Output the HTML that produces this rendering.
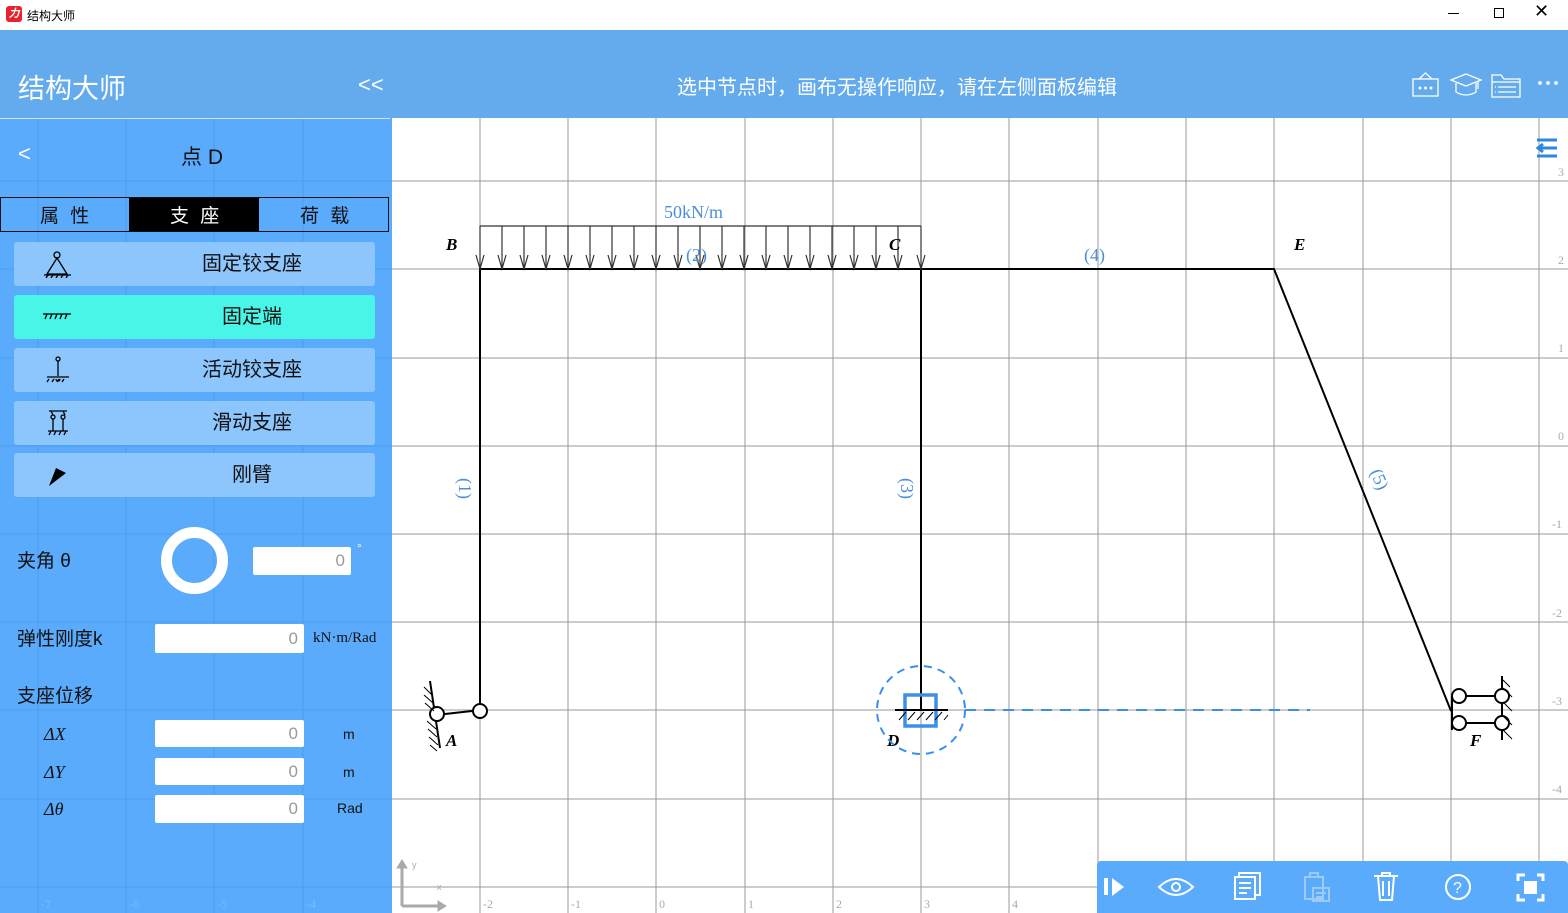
<!DOCTYPE html>
<html><head><meta charset="utf-8"><style>
*{margin:0;padding:0;box-sizing:border-box}
body{width:1568px;height:913px;overflow:hidden;position:relative;background:#fff;font-family:"Liberation Sans","Noto Sans CJK SC",sans-serif}
.abs{position:absolute}
.top{left:0;top:0;width:1568px;height:30px;background:#fff;font-size:12px;color:#000}
.hdr{left:0;top:30px;width:1568px;height:88px;background:#64abee;color:#fff}
.side{left:0;top:118px;width:392px;height:795px;background:#5aabfb;overflow:hidden}
.btn{position:absolute;left:14px;width:361px;height:44px;background:#8dc5fd;border-radius:3px;font-size:20px;color:#111;line-height:44px}
.btn span{position:absolute;left:0;width:476px;text-align:center}
.inp{position:absolute;background:#fff;border-radius:2px;color:#999;text-align:right;padding-right:6px;font-size:17px}
.lbl{position:absolute;font-size:19px;color:#111}
</style></head><body>
<div class="abs top">
 <div class="abs" style="left:6px;top:6px;width:16px;height:16px;background:#e8232e;border-radius:3px;color:#fff;font-size:11px;font-weight:bold;text-align:center;line-height:16px;font-style:italic">力</div>
 <div class="abs" style="left:27px;top:7px">结构大师</div>
 <div class="abs" style="left:1448px;top:13px;width:11px;height:1px;background:#000"></div>
 <div class="abs" style="left:1494px;top:8px;width:10px;height:10px;border:1px solid #000"></div>
 <div class="abs" style="left:1534px;top:1px;font-size:18px">✕</div>
</div>
<div class="abs hdr">
 <div class="abs" style="left:18px;top:37px;font-size:27px">结构大师</div>
 <div class="abs" style="left:358px;top:42px;font-size:22px">&lt;&lt;</div>
 <div class="abs" style="left:677px;top:41px;font-size:20px">选中节点时，画布无操作响应，请在左侧面板编辑</div>
 <svg class="abs" style="left:1410px;top:40px" width="158" height="30" fill="none" stroke="#fff" stroke-width="1.3">
  <rect x="3" y="9" width="25" height="17"/><path d="M9 9 L15.5 3 L22 9"/><circle cx="10" cy="18" r=".8" fill="#fff"/><circle cx="15.5" cy="18" r=".8" fill="#fff"/><circle cx="21" cy="18" r=".8" fill="#fff"/>
  <path d="M41 10 L56 4 L71 10 L56 16 Z"/><path d="M46 13 V22 Q56 28 66 22 V13"/><path d="M68 11 V19"/>
  <path d="M82 5 H91 L94 9 H110 V27 H82 Z"/><path d="M82 12 H110"/><path d="M88 17 H106 M88 22 H106 M85 17 H86 M85 22 H86"/>
  <circle cx="130" cy="13" r="1.2" fill="#fff"/><circle cx="138" cy="13" r="1.2" fill="#fff"/><circle cx="146" cy="13" r="1.2" fill="#fff"/>
 </svg>
</div>

<svg class="abs" style="left:0;top:118px" width="1568" height="795">
 <g stroke="#999" stroke-width="1">
  <path d="M480 0V795M568 0V795M656 0V795M745 0V795M833 0V795M921 0V795M1009 0V795M1098 0V795M1186 0V795M1274 0V795M1363 0V795M1451 0V795M1539 0V795"/>
  <path d="M392 63H1568M392 151H1568M392 240H1568M392 328H1568M392 416H1568M392 504H1568M392 592H1568M392 681H1568M392 769H1568"/>
 </g>
 <g fill="#aaa" font-family="Liberation Serif" font-size="12">
  <text x="483" y="790">-2</text><text x="571" y="790">-1</text><text x="659" y="790">0</text><text x="748" y="790">1</text><text x="836" y="790">2</text><text x="924" y="790">3</text><text x="1012" y="790">4</text><text x="1558" y="58">3</text><text x="1558" y="146">2</text><text x="1558" y="234">1</text><text x="1558" y="322">0</text><text x="1552" y="410">-1</text><text x="1552" y="499">-2</text><text x="1552" y="587">-3</text><text x="1552" y="675">-4</text><text x="1552" y="763">-5</text>
 </g>
 <path d="M1537 22H1557M1537 30H1557M1537 38H1557M1546 30H1538M1543 26L1538 30L1543 34" stroke="#2d86e0" stroke-width="3" fill="none"/>
 <g stroke="#000" stroke-width="2" fill="none">
  <path d="M480 593V151H1274L1451 593"/><path d="M921 151V593"/>
 </g>
 <g stroke="#333" stroke-width="1.2" fill="none">
  <path d="M480 108H921"/>
  <path d="M480 108V151M502 108V151M524 108V151M546 108V151M568 108V151M590 108V151M612 108V151M634 108V151M656 108V151M678 108V151M700 108V151M722 108V151M744 108V151M766 108V151M788 108V151M810 108V151M832 108V151M854 108V151M876 108V151M898 108V151M921 108V151"/>
  <path d="M476 137L480 151L484 137M498 137L502 151L506 137M520 137L524 151L528 137M542 137L546 151L550 137M564 137L568 151L572 137M586 137L590 151L594 137M608 137L612 151L616 137M630 137L634 151L638 137M652 137L656 151L660 137M674 137L678 151L682 137M696 137L700 151L704 137M718 137L722 151L726 137M740 137L744 151L748 137M762 137L766 151L770 137M784 137L788 151L792 137M806 137L810 151L814 137M828 137L832 151L836 137M850 137L854 151L858 137M872 137L876 151L880 137M894 137L898 151L902 137M917 137L921 151L925 137"/>
 </g>
 <g fill="#4a90d9" font-family="Liberation Serif" font-size="18">
  <text x="664" y="100">50kN/m</text>
  <text x="686" y="143">(2)</text><text x="1084" y="143">(4)</text>
  <text transform="translate(459,360) rotate(90)">(1)</text>
  <text transform="translate(901,360) rotate(90)">(3)</text>
  <text transform="translate(1370,354) rotate(67)">(5)</text>
 </g>
 <g font-family="Liberation Serif" font-style="italic" font-weight="bold" font-size="17" fill="#000">
  <text x="446" y="132">B</text><text x="889" y="132">C</text><text x="1294" y="132">E</text><text x="446" y="628">A</text><text x="887" y="628">D</text><text x="1470" y="628">F</text>
 </g>
 <g stroke="#000" stroke-width="2" fill="#fff">
  <path d="M430 563L440 630" fill="none"/><path d="M445 596L472 593" fill="none"/>
  <circle cx="437" cy="596" r="7"/><circle cx="480" cy="593" r="7"/>
 </g>
 <path d="M424 569L432 577M424 577L433 585M425 585L434 593M427 603L436 611M428 611L437 619M429 619L438 627M430 627L437 633" stroke="#000" stroke-width="1"/>
 <rect x="905" y="577" width="31" height="31" fill="none" stroke="#3a8fe8" stroke-width="3.5"/>
 <path d="M895 592H948" stroke="#000" stroke-width="2"/>
 <path d="M899 602L906 594M908 602L915 594M917 602L924 594M926 602L933 594M935 602L942 594M944 602L948 597" stroke="#000" stroke-width="1"/>
 <circle cx="921" cy="592" r="44" fill="none" stroke="#3a8fe8" stroke-width="2" stroke-dasharray="8 6"/>
 <path d="M965 592H1310" stroke="#3a8fe8" stroke-width="2" stroke-dasharray="11 8"/>
 <g stroke="#000" stroke-width="2" fill="#fff">
  <path d="M1452 578V612M1502 558V622M1467 578H1495M1467 605H1495" fill="none"/>
  <circle cx="1459" cy="578" r="7"/><circle cx="1459" cy="605" r="7"/><circle cx="1502" cy="578" r="7"/><circle cx="1502" cy="605" r="7"/>
 </g>
 <path d="M1503 562L1510 569M1503 570L1512 579M1503 584L1512 593M1503 598L1512 607M1503 612L1512 621" stroke="#000" stroke-width="1"/>
 <g stroke="#aaa" stroke-width="3" fill="#aaa"><path d="M402 788V748M402 788H440"/><path d="M397 750L402 742L407 750Z" stroke-width="1"/><path d="M438 783L446 788L438 793Z" stroke-width="1"/></g>
 <text x="412" y="750" font-size="9" fill="#aaa">y</text><text x="437" y="772" font-size="9" fill="#aaa">x</text>
</svg>

<div class="abs" style="left:1097px;top:861px;width:471px;height:52px;background:#5aabfb;border-radius:4px 4px 0 0"></div>
<svg class="abs" style="left:1097px;top:861px" width="471" height="52" fill="none" stroke="#fff" stroke-width="2">
 <path d="M9 17V34" stroke-width="4"/><path d="M15 17L27 26L15 35Z" fill="#fff" stroke="none"/>
 <path d="M62 26Q79 10 96 26Q79 42 62 26Z"/><circle cx="79" cy="26" r="4"/>
 <rect x="138" y="16" width="20" height="22"/><path d="M142 16V12H163V34H158M142 22H154M142 27H154M142 32H150"/>
 <g stroke="#9ccbf7"><rect x="208" y="16" width="18" height="22"/><path d="M213 16V12H221V16M216 27H232V40H216ZM219 32H229M219 36H226"/></g>
 <path d="M277 15H301M281 15L283 39H295L297 15M286 20V35M292 20V35M285 15V12H293V15"/>
 <circle cx="361" cy="26" r="12"/><text x="356" y="32" fill="#fff" stroke="none" font-size="16" font-family="Liberation Sans">?</text>
 <path d="M421 20V14H428M440 14H446V20M446 33V39H440M428 39H421V33" stroke-width="3"/><rect x="427" y="20" width="13" height="13" fill="#fff" stroke="none"/>
</svg>

<div class="abs side">
 <svg class="abs" style="left:0;top:0" width="392" height="795">
  <g stroke="#4d9df0" stroke-width="1"><path d="M38 0V795M126 0V795M214 0V795M303 0V795"/><path d="M0 63H392M0 151H392M0 240H392M0 328H392M0 416H392M0 504H392M0 592H392M0 681H392M0 769H392"/></g>
  <g fill="#7cbcf8" font-family="Liberation Serif" font-size="12"><text x="41" y="790">-7</text><text x="129" y="790">-6</text><text x="217" y="790">-5</text><text x="306" y="790">-4</text></g>
 </svg>
 <div class="abs" style="left:0;top:0;width:390px;height:1px;background:#cfe4fb"></div>
 <div class="abs" style="left:18px;top:23px;font-size:22px;color:#fff">&lt;</div>
 <div class="abs" style="left:181px;top:23px;font-size:21px;color:#111">点 D</div>
 <div class="abs" style="left:0;top:79px;width:389px;height:35px;border:1.5px solid #111"></div>
 <div class="abs" style="left:129px;top:80px;width:130px;height:33px;background:#000"></div>
 <div class="abs" style="left:40px;top:83px;font-size:19px;color:#111;letter-spacing:3px">属 性</div>
 <div class="abs" style="left:170px;top:83px;font-size:19px;color:#fff;letter-spacing:3px">支 座</div>
 <div class="abs" style="left:300px;top:83px;font-size:19px;color:#111;letter-spacing:3px">荷 载</div>

 <div class="btn" style="top:124px"><span>固定铰支座</span>
  <svg class="abs" style="left:28px;top:8px" width="30" height="28" fill="none" stroke="#000" stroke-width="1.3"><circle cx="15" cy="5" r="3"/><path d="M15 8L5 24H25Z M2 25H29 M4 28L6 25M9 28L11 25M14 28L16 25M19 28L21 25M24 28L26 25"/></svg></div>
 <div class="btn" style="top:177px;background:#48f5e6"><span>固定端</span>
  <svg class="abs" style="left:28px;top:16px" width="30" height="10" fill="none" stroke="#000" stroke-width="1.3"><path d="M1 3H29 M3 8L5 3M8 8L10 3M13 8L15 3M18 8L20 3M23 8L25 3"/></svg></div>
 <div class="btn" style="top:230px"><span>活动铰支座</span>
  <svg class="abs" style="left:30px;top:8px" width="28" height="28" fill="none" stroke="#000" stroke-width="1.3"><circle cx="14" cy="3" r="2"/><path d="M14 5V20M3 21H25M12 23a2 2 0 1 0 4 0 M3 26L5 23M8 26L10 23M13 26L15 23M18 26L20 23"/></svg></div>
 <div class="btn" style="top:283px"><span>滑动支座</span>
  <svg class="abs" style="left:32px;top:8px" width="24" height="28" fill="none" stroke="#000" stroke-width="1.3"><path d="M3 2H21M5 2L7 6M17 2L19 6"/><circle cx="7" cy="8" r="2"/><circle cx="17" cy="8" r="2"/><path d="M7 10V22M17 10V22M2 22H22M3 26L5 22M8 26L10 22M13 26L15 22M18 26L20 22"/></svg></div>
 <div class="btn" style="top:335px"><span>刚臂</span>
  <svg class="abs" style="left:32px;top:9px" width="24" height="26"><path d="M3 24L10 6L20 11Z" fill="#000"/></svg></div>

 <div class="lbl" style="left:17px;top:428px">夹角 θ</div>
 <div class="abs" style="left:161px;top:409px;width:67px;height:67px;border:11px solid #fff;border-radius:50%"></div>
 <div class="inp" style="left:253px;top:429px;width:98px;height:28px;line-height:28px">0</div>
 <div class="abs" style="left:357px;top:423px;font-size:12px;color:#fff">°</div>

 <div class="lbl" style="left:17px;top:506px">弹性刚度k</div>
 <div class="inp" style="left:155px;top:506px;width:149px;height:29px;line-height:29px">0</div>
 <div class="abs" style="left:313px;top:512px;font-size:15px;color:#111;font-family:'Liberation Serif',serif">kN·m/Rad</div>

 <div class="lbl" style="left:17px;top:563px">支座位移</div>
 <div class="abs" style="left:44px;top:606px;font-size:18px;font-style:italic;font-family:'Liberation Serif',serif;color:#111">ΔX</div>
 <div class="abs" style="left:44px;top:644px;font-size:18px;font-style:italic;font-family:'Liberation Serif',serif;color:#111">ΔY</div>
 <div class="abs" style="left:44px;top:681px;font-size:18px;font-style:italic;font-family:'Liberation Serif',serif;color:#111">Δθ</div>
 <div class="inp" style="left:155px;top:602px;width:149px;height:27px;line-height:27px">0</div>
 <div class="inp" style="left:155px;top:640px;width:149px;height:27px;line-height:27px">0</div>
 <div class="inp" style="left:155px;top:677px;width:149px;height:28px;line-height:28px">0</div>
 <div class="abs" style="left:343px;top:608px;font-size:14px;color:#111">m</div>
 <div class="abs" style="left:343px;top:646px;font-size:14px;color:#111">m</div>
 <div class="abs" style="left:337px;top:682px;font-size:14px;color:#111">Rad</div>
</div>
</body></html>
